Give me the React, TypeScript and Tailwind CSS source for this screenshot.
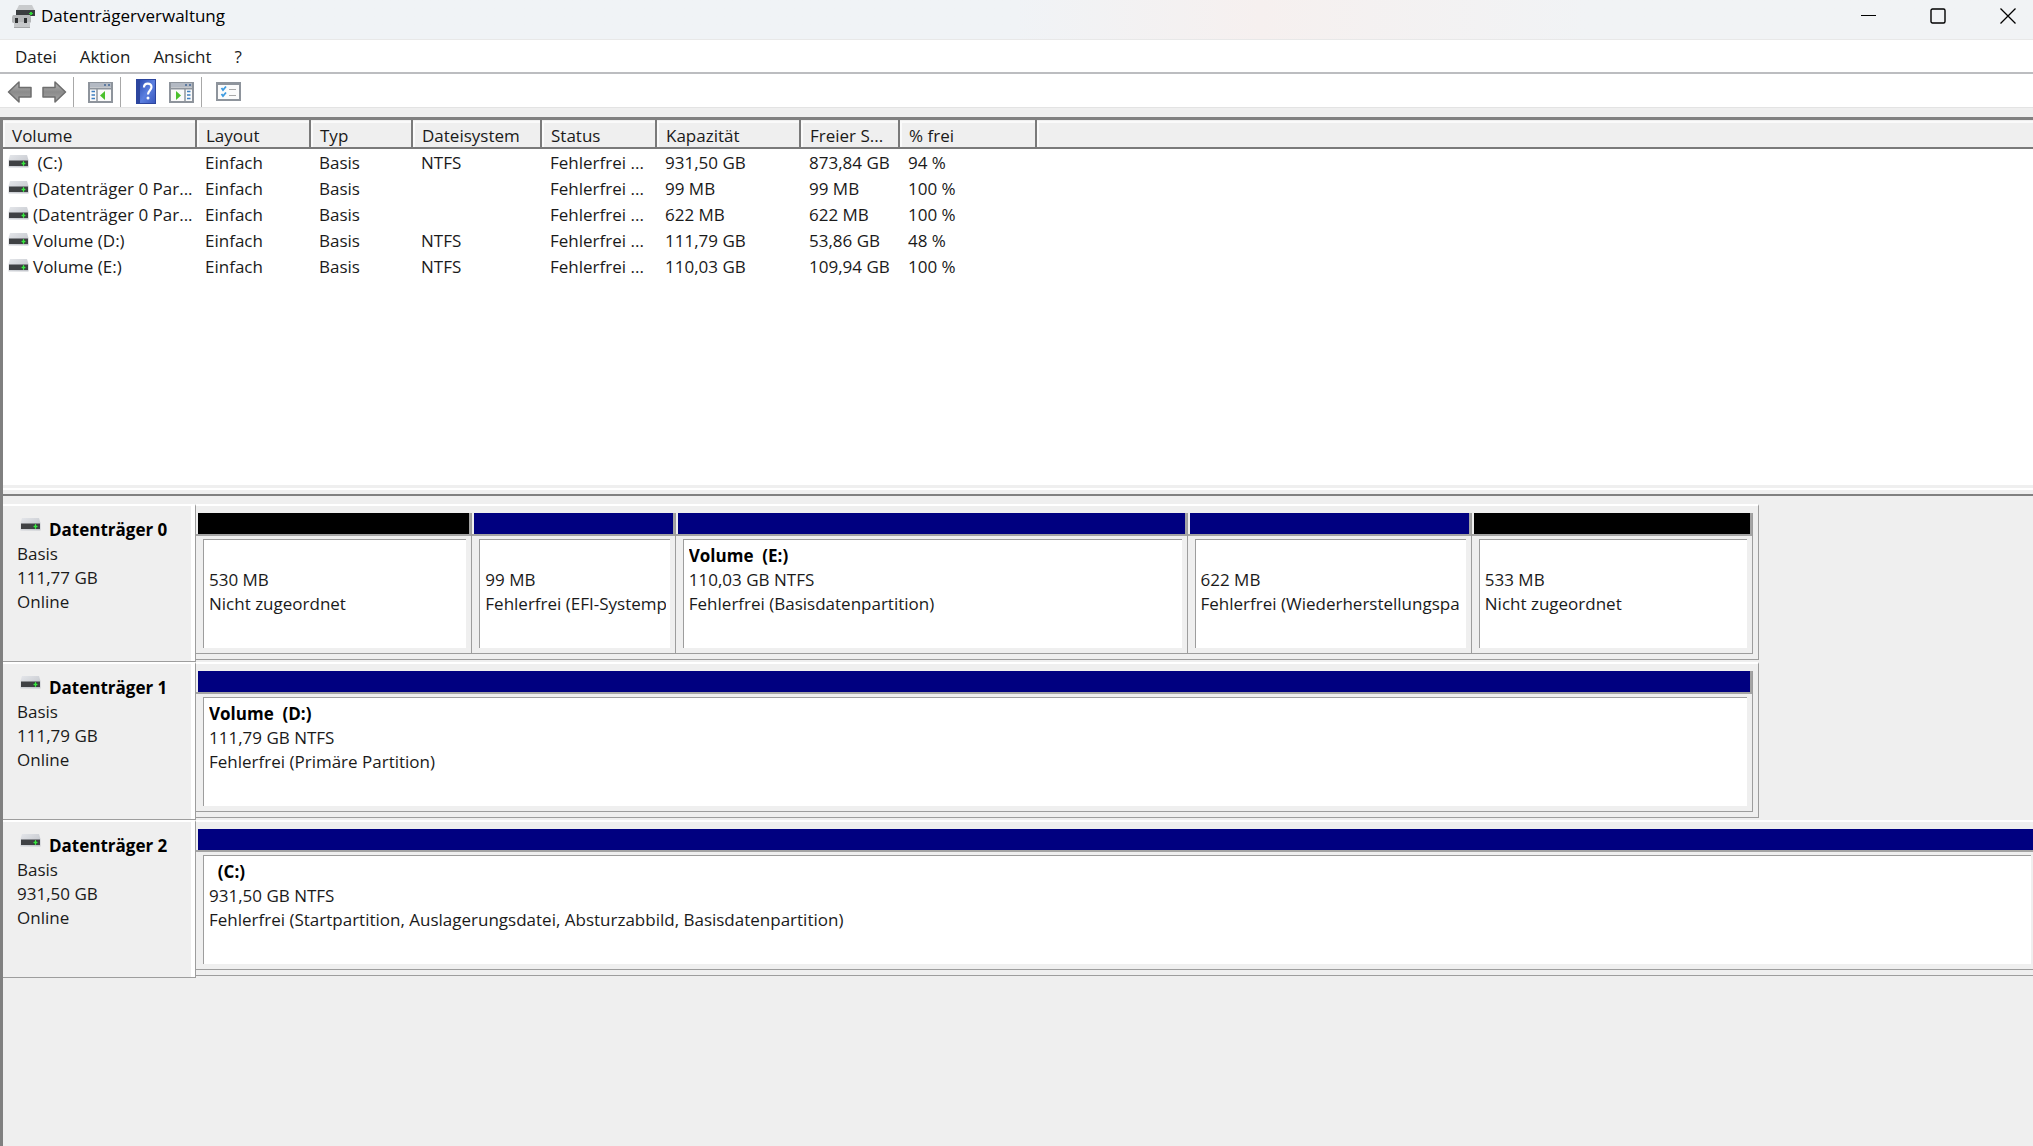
import type { ReactNode } from "react";

interface Volume {
  name: string;
  fs: string;
  capacity: string;
  free: string;
  percent: string;
}

interface Partition {
  title?: string;
  size: string;
  status: string;
  weight: number;
  unallocated?: boolean;
}

interface Disk {
  name: string;
  size: string;
  full?: boolean;
  partitions: Partition[];
}

const VOLUMES: Volume[] = [
  { name: "\u00a0(C:)", fs: "NTFS", capacity: "931,50 GB", free: "873,84 GB", percent: "94 %" },
  { name: "(Datenträger 0 Par...", fs: "", capacity: "99 MB", free: "99 MB", percent: "100 %" },
  { name: "(Datenträger 0 Par...", fs: "", capacity: "622 MB", free: "622 MB", percent: "100 %" },
  { name: "Volume (D:)", fs: "NTFS", capacity: "111,79 GB", free: "53,86 GB", percent: "48 %" },
  { name: "Volume (E:)", fs: "NTFS", capacity: "110,03 GB", free: "109,94 GB", percent: "100 %" },
];

const COLUMNS = [
  { label: "Volume", width: "w-[193px]" },
  { label: "Layout", width: "w-[114px]" },
  { label: "Typ", width: "w-[102px]" },
  { label: "Dateisystem", width: "w-[129px]" },
  { label: "Status", width: "w-[115px]" },
  { label: "Kapazität", width: "w-[144px]" },
  { label: "Freier S...", width: "w-[99px]" },
  { label: "% frei", width: "w-[137px]" },
];

const DISKS: Disk[] = [
  {
    name: "Datenträger 0",
    size: "111,77 GB",
    partitions: [
      { size: "530 MB", status: "Nicht zugeordnet", weight: 276, unallocated: true },
      { size: "99 MB", status: "Fehlerfrei (EFI-Systemp", weight: 203 },
      { title: "Volume\u00a0 (E:)", size: "110,03 GB NTFS", status: "Fehlerfrei (Basisdatenpartition)", weight: 512 },
      { size: "622 MB", status: "Fehlerfrei (Wiederherstellungspa", weight: 284 },
      { size: "533 MB", status: "Nicht zugeordnet", weight: 281, unallocated: true },
    ],
  },
  {
    name: "Datenträger 1",
    size: "111,79 GB",
    partitions: [
      { title: "Volume\u00a0 (D:)", size: "111,79 GB NTFS", status: "Fehlerfrei (Primäre Partition)", weight: 1 },
    ],
  },
  {
    name: "Datenträger 2",
    size: "931,50 GB",
    full: true,
    partitions: [
      {
        title: "\u00a0 (C:)",
        size: "931,50 GB NTFS",
        status: "Fehlerfrei (Startpartition, Auslagerungsdatei, Absturzabbild, Basisdatenpartition)",
        weight: 1,
      },
    ],
  },
];

function DriveIcon() {
  return (
    <svg width="21" height="13" viewBox="0 0 21 13" className="shrink-0" aria-hidden="true">
      <defs>
        <linearGradient id="driveTop" x1="0" y1="0" x2="1" y2="1">
          <stop offset="0" stopColor="#e4e6ea" />
          <stop offset="1" stopColor="#bfc2c8" />
        </linearGradient>
      </defs>
      <path d="M2 0h17l1.500 5v7.500H.5V5z" fill="url(#driveTop)" />
      <rect x="1" y="5.500" width="19" height="5.500" fill="#3f4144" />
      <path d="M14 7h3v3h-3z" fill="#1f9a26" />
      <path d="M15 6h1v5h-1zM13.500 8h4v1h-4z" fill="#3fe046" />
    </svg>
  );
}

function AppIcon() {
  return (
    <svg width="24" height="23" viewBox="0 0 24 23" className="shrink-0" aria-hidden="true">
      <path d="M7 0h13l3 6H4z" fill="#c9cbcd" />
      <path d="M4 5h19v6H4z" fill="#3a3d3f" />
      <path d="M17 8h4v1h-4zM18 7h2v3h-2z" fill="#31d838" />
      <path d="M1 10h17l1 2v5l-1 1H1l-1-1v-5z" fill="#b4b6b8" />
      <path d="M2 17h16v5H2z" fill="#c6c8ca" />
      <path d="M2 22h16v1H2z" fill="#a3a5a7" />
      <rect x="3" y="13" width="3" height="5" fill="#2f3133" />
      <rect x="12" y="13" width="3" height="5" fill="#2f3133" />
    </svg>
  );
}

function ArrowIcon({ flip }: { flip?: boolean }) {
  return (
    <svg width="26" height="22" viewBox="0 0 26 22" className={flip ? "-scale-x-100" : ""} aria-hidden="true">
      <defs>
        <linearGradient id="arrowFill" x1="0" y1="0" x2="0" y2="1">
          <stop offset="0" stopColor="#b8b8b8" />
          <stop offset="0.5" stopColor="#8b8b8b" />
          <stop offset="1" stopColor="#a6a6a6" />
        </linearGradient>
      </defs>
      <path
        d="M1.500 11 12 1v5.500h12v9.500H12v5z"
        fill="url(#arrowFill)"
        stroke="#6e6e6e"
        strokeWidth="1.500"
        strokeLinejoin="round"
      />
    </svg>
  );
}

function PaneIcon({ side }: { side: "left" | "right" }) {
  const left = side === "left";
  return (
    <svg width="25" height="23" viewBox="0 -2 25 23" aria-hidden="true">
      <rect x="1" y="1" width="23" height="19" fill="#fafafa" stroke="#8e949c" strokeWidth="2" />
      <path d="M2 1h21v4H2z" fill="#b3b9c3" />
      <path d="M16 2h2v2h-2zM20 2h2v2h-2z" fill="#5e7ba0" />
      <path d="M2 5.500h21v2H2z" fill="#8e949c" />
      <path d={left ? "M9 7v12" : "M16 7v12"} stroke="#8e949c" strokeWidth="1.500" />
      <path
        d={left ? "M3.500 9.500H7M3.500 13H7M3.500 16.500H7" : "M18 9.500h3.500M18 13h3.500M18 16.500h3.500"}
        stroke="#3f7fc0"
        strokeWidth="1.500"
      />
      <path d={left ? "M17 9v9l-5-4.500z" : "M7 9v9l5-4.500z"} fill="#4ac02c" />
    </svg>
  );
}

function HelpIcon() {
  return (
    <svg width="20" height="25" viewBox="0 0 20 25" aria-hidden="true">
      <defs>
        <linearGradient id="helpCover" x1="0" y1="0" x2="1" y2="1">
          <stop offset="0" stopColor="#2f4fb4" />
          <stop offset="0.5" stopColor="#5b7fe0" />
          <stop offset="1" stopColor="#3a58be" />
        </linearGradient>
      </defs>
      <rect width="20" height="25" fill="#2c459e" />
      <rect x="4" y="1" width="15" height="23" fill="url(#helpCover)" />
      <path
        d="M8 8.500c0-5 7.500-5 7.500-.5 0 3.500-3.500 3.500-3.500 7.500"
        fill="none"
        stroke="#fff"
        strokeWidth="2.200"
      />
      <circle cx="12" cy="19" r="1.500" fill="#fff" />
    </svg>
  );
}

function ChecklistIcon() {
  return (
    <svg width="25" height="19" viewBox="0 0 25 19" aria-hidden="true">
      <rect x="1" y="1" width="23" height="17" fill="#fbfbfb" stroke="#8e949c" strokeWidth="2" />
      <path d="M2 2h21v1H2z" fill="#8e949c" />
      <path d="m5.500 6 1.500 2 3-3.500M5.500 12l1.500 2 3-3.500" fill="none" stroke="#3d9be0" strokeWidth="1.800" />
      <path d="M13 7.500h7M13 13.500h7" stroke="#a8a8a8" />
    </svg>
  );
}

function ToolButton({ label, children }: { label: string; children: ReactNode }) {
  return (
    <button type="button" aria-label={label} className="flex items-center justify-center">
      {children}
    </button>
  );
}

function TitleBar() {
  return (
    <header className="flex h-10 items-start justify-between border-b border-[#e8e8e8] bg-linear-to-r from-[#f0f3f6] from-50% via-[#f6f0ef] via-62% to-[#f1f3f5] to-78%">
      <div className="flex items-center gap-[5px] pt-1 pl-3">
        <AppIcon />
        <h1 className="text-[17px] leading-6 text-black">Datenträgerverwaltung</h1>
      </div>
      <div className="flex gap-[54px] pt-2 pr-[17px]">
        <button type="button" aria-label="Minimieren">
          <svg width="15" height="16" viewBox="0 0 15 16" aria-hidden="true">
            <path d="M0 7.500h15" stroke="#000" />
          </svg>
        </button>
        <button type="button" aria-label="Maximieren">
          <svg width="16" height="16" viewBox="0 0 16 16" aria-hidden="true">
            <rect x="1" y="1" width="14" height="14" rx="1.500" fill="none" stroke="#000" strokeWidth="1.400" />
          </svg>
        </button>
        <button type="button" aria-label="Schließen">
          <svg width="16" height="16" viewBox="0 0 16 16" aria-hidden="true">
            <path d="m.5.5 15 15M15.500.5l-15 15" stroke="#000" strokeWidth="1.300" />
          </svg>
        </button>
      </div>
    </header>
  );
}

function Toolbar() {
  return (
    <div className="flex h-[34px] items-center border-b border-[#e3e3e3] bg-white pt-[2px] pl-[7px]">
      <div className="flex gap-2">
        <ToolButton label="Zurück">
          <ArrowIcon />
        </ToolButton>
        <ToolButton label="Vorwärts">
          <ArrowIcon flip />
        </ToolButton>
      </div>
      <div className="ml-[6px] h-[30px] w-px bg-[#a8a8a8]" />
      <div className="ml-[14px]">
        <ToolButton label="Konsolenstruktur ein-/ausblenden">
          <PaneIcon side="left" />
        </ToolButton>
      </div>
      <div className="ml-[7px] h-[30px] w-px bg-[#a8a8a8]" />
      <div className="ml-[15px] flex items-center gap-[13px]">
        <ToolButton label="Hilfe">
          <HelpIcon />
        </ToolButton>
        <ToolButton label="Aktionsbereich ein-/ausblenden">
          <PaneIcon side="right" />
        </ToolButton>
      </div>
      <div className="ml-[7px] h-[30px] w-px bg-[#a8a8a8]" />
      <div className="ml-[14px]">
        <ToolButton label="Einstellungen">
          <ChecklistIcon />
        </ToolButton>
      </div>
    </div>
  );
}

function VolumeList() {
  return (
    <section className="h-[365px] overflow-hidden bg-white">
      <table className="w-full table-fixed border-collapse text-left">
        <thead>
          <tr className="h-7 border-b-2 border-[#7a7a7a] bg-[#efefef]">
            {COLUMNS.map((col) => (
              <th
                key={col.label}
                scope="col"
                className={`${col.width} border-r-2 border-[#7a7a7a] p-0 font-normal`}
              >
                <div className="h-[26px] overflow-hidden border-t-2 border-l-2 border-[#fafafa] pt-px pl-[7px] leading-6 whitespace-nowrap">
                  {col.label}
                </div>
              </th>
            ))}
            <td className="p-0">
              <div className="h-[26px] border-t-2 border-l-2 border-[#fafafa]" />
            </td>
          </tr>
        </thead>
        <tbody>
          {VOLUMES.map((vol, i) => (
            <tr key={i} className="h-[26px] leading-6 whitespace-nowrap *:pt-[2px]">
              <td className="p-0 pl-[5px]">
                <div className="flex gap-1">
                  <div className="pt-1">
                    <DriveIcon />
                  </div>
                  <span>{vol.name}</span>
                </div>
              </td>
              <td className="p-0 pl-[9px]">Einfach</td>
              <td className="p-0 pl-[9px]">Basis</td>
              <td className="p-0 pl-[9px]">{vol.fs}</td>
              <td className="p-0 pl-[9px]">Fehlerfrei ...</td>
              <td className="p-0 pl-[9px]">{vol.capacity}</td>
              <td className="p-0 pl-[9px]">{vol.free}</td>
              <td className="p-0 pl-[9px]">{vol.percent}</td>
              <td className="p-0" />
            </tr>
          ))}
        </tbody>
      </table>
    </section>
  );
}

function PartitionBox({ partition, openEnd }: { partition: Partition; openEnd?: boolean }) {
  return (
    <div
      className={`flex min-w-0 basis-0 flex-col border-b border-[#9d9d9d] ${openEnd ? "" : "border-r"}`}
      style={{ flexGrow: partition.weight }}
    >
      <div className={`border-b-2 border-[#a4a4a4] pl-[2px] ${openEnd ? "" : "border-r-2"}`}>
        <div className={`h-[21px] ${partition.unallocated ? "bg-black" : "bg-[#000080]"}`} />
      </div>
      <div className={`flex-1 pt-[3px] pb-[5px] pl-[7px] ${openEnd ? "pr-[2px]" : "pr-[5px]"}`}>
        <div className="h-full overflow-hidden border-t border-l border-[#9d9d9d] bg-white pt-1 pr-1 pl-[5px]">
          <div className="overflow-hidden leading-6 whitespace-nowrap">
            <p className="h-6 font-bold text-black">{partition.title}</p>
            <p>{partition.size}</p>
            <p>{partition.status}</p>
          </div>
        </div>
      </div>
    </div>
  );
}

function DiskRow({ disk }: { disk: Disk }) {
  return (
    <div className="flex h-[158px]">
      <div className="w-[193px] shrink-0 border-t-2 border-r border-b border-t-white border-r-[#9d9d9d] border-b-[#9d9d9d]">
        <div className="h-full border-r-4 border-white pt-3 pl-[14px] leading-6">
          <div className="flex gap-2 pl-[3px]">
            <DriveIcon />
            <h2 className="font-bold text-black">{disk.name}</h2>
          </div>
          <p>Basis</p>
          <p>{disk.size}</p>
          <p>Online</p>
        </div>
      </div>
      <div
        className={`mb-[2px] flex min-w-0 border-t-2 border-b border-t-white border-b-[#9d9d9d] pt-[7px] pb-[5px] ${
          disk.full ? "flex-1" : "w-[77%] border-r border-r-[#9d9d9d] pr-[5px]"
        }`}
      >
        {disk.partitions.map((partition, i) => (
          <PartitionBox key={i} partition={partition} openEnd={disk.full} />
        ))}
      </div>
    </div>
  );
}

export default function App() {
  return (
    <div className="flex min-h-screen flex-col overflow-hidden bg-[#efefef] font-['Open_Sans',sans-serif] text-[17px] text-[#1a1a1a]">
      <TitleBar />
      <nav className="flex h-[34px] items-center gap-[23px] border-b-2 border-[#bcbdc0] bg-white pt-[2px] pl-[15px] leading-6">
        <button type="button">Datei</button>
        <button type="button">Aktion</button>
        <button type="button">Ansicht</button>
        <button type="button">?</button>
      </nav>
      <Toolbar />
      <main className="mt-[9px] flex-1 border-t-3 border-l-3 border-[#808080]">
        <VolumeList />
        <div className="h-[11px] border-t-3 border-b-2 border-t-[#efefef] border-b-[#808080]">
          <div className="h-[2px] bg-white" />
        </div>
        <section className="pt-2">
          {DISKS.map((disk) => (
            <DiskRow key={disk.name} disk={disk} />
          ))}
        </section>
      </main>
    </div>
  );
}
